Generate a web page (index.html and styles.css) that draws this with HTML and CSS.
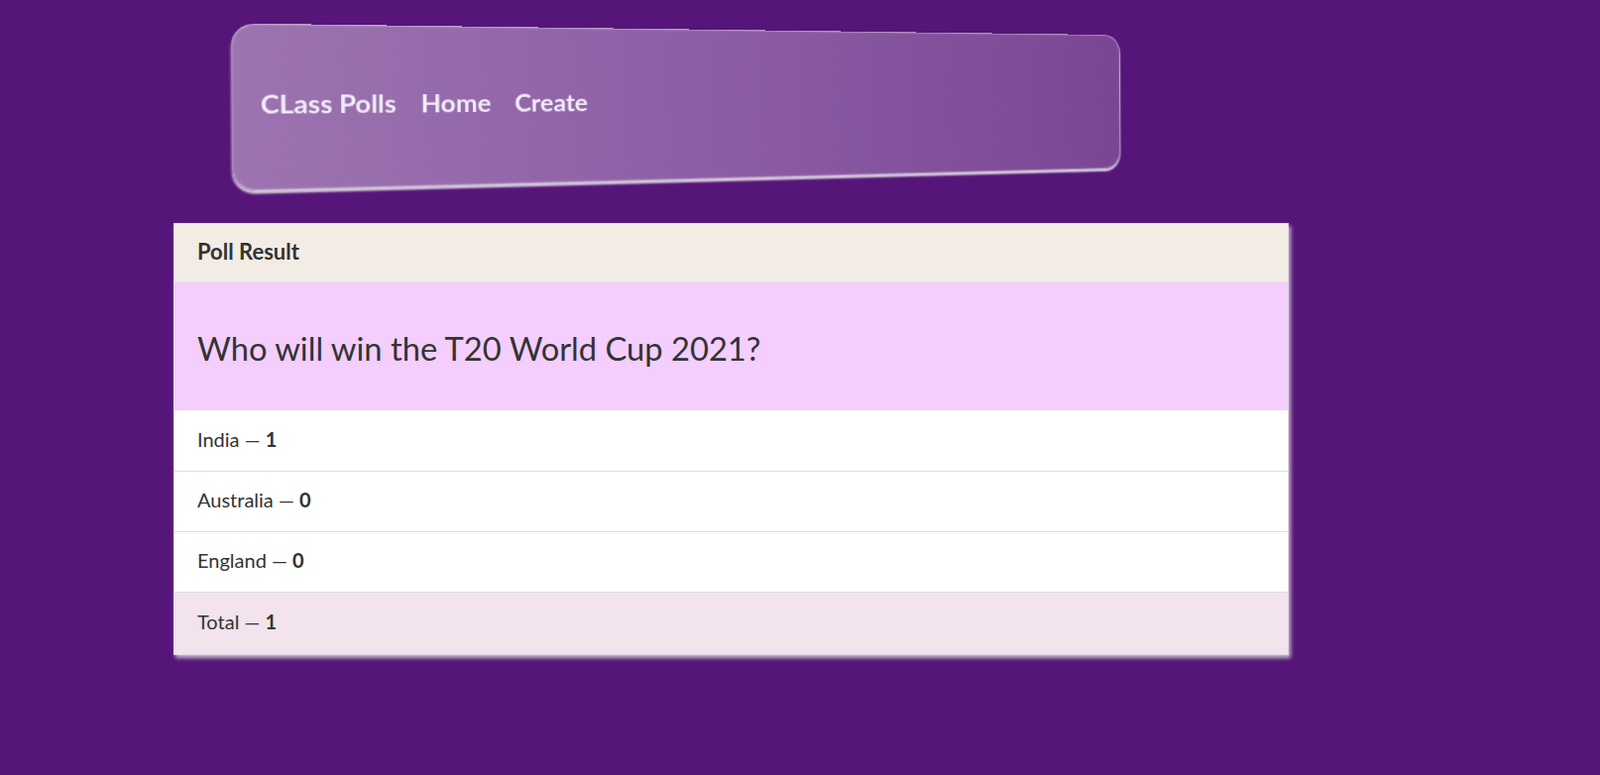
FILE: index.html
```html
<!DOCTYPE html>
<html lang="en">
<head>
<meta charset="utf-8">
<title>CLass Polls</title>
<link rel="stylesheet" href="styles.css">
</head>
<body>
<nav class="navbar">
  <a class="brand" href="#">CLass Polls</a>
  <a class="nav-link" href="#">Home</a>
  <a class="nav-link" href="#">Create</a>
</nav>
<main class="card">
  <div class="card-header">Poll Result</div>
  <div class="question">Who will win the T20 World Cup 2021?</div>
  <ul class="results">
    <li class="row">India — <b>1</b></li>
    <li class="row">Australia — <b>0</b></li>
    <li class="row">England — <b>0</b></li>
    <li class="row total">Total — <b>1</b></li>
  </ul>
</main>
</body>
</html>
```
FILE: styles.css
```css
html, body {
  margin: 0;
  padding: 0;
}
body {
  background: #561578;
  font-family: Lato, "Open Sans", sans-serif;
  color: #333;
  min-height: 782px;
}
.navbar {
  box-sizing: border-box;
  width: 914px;
  height: 150px;
  margin: 30px 0 0 276px;
  padding: 0 23px 6px;
  display: flex;
  align-items: center;
  gap: 22px;
  border-radius: 20px;
  background: linear-gradient(90deg, #9c74b0 0%, #8c5ca4 50%, #7a4694 100%);
  border: 1px solid rgba(255, 255, 255, 0.35);
  box-shadow: 0 3px 2px rgba(230, 230, 235, 0.85), inset 0 0 2px rgba(255,255,255,0.3);
  transform: perspective(1000px) rotateY(14.5deg) rotateZ(-0.35deg);
}
.navbar a {
  color: #f2ecf8;
  text-decoration: none;
  font-weight: 700;
  font-size: 23.6px;
}
.card {
  display: block;
  box-sizing: border-box;
  width: 1125px;
  margin: 45px 0 0 175px;
  background: #fff;
  border: 1px solid #e6d3ee;
  box-shadow: 2px 3px 4px rgba(205, 205, 210, 0.9);
}
.card-header {
  box-sizing: border-box;
  height: 59px;
  display: flex;
  align-items: center;
  padding: 0 23px 4px;
  background: #f3ece5;
  border-bottom: 1px solid #ece6d6;
  font-weight: 700;
  font-size: 22px;
  color: #333;
}
.question {
  box-sizing: border-box;
  height: 129px;
  display: flex;
  align-items: center;
  padding: 4px 23px 0;
  background: #f4cefd;
  font-size: 32.7px;
  color: #333;
}
.results {
  list-style: none;
  margin: 0;
  padding: 0;
}
.row {
  box-sizing: border-box;
  height: 61px;
  display: flex;
  align-items: center;
  padding: 0 23px 4px;
  font-size: 20px;
  color: #333;
  border-top: 1px solid #dcdcdc;
  white-space: pre;
}
.row:first-child {
  border-top: none;
}
.row b {
  font-weight: 700;
}
.total {
  height: 63px;
  background: #f2e3ec;
}
```
